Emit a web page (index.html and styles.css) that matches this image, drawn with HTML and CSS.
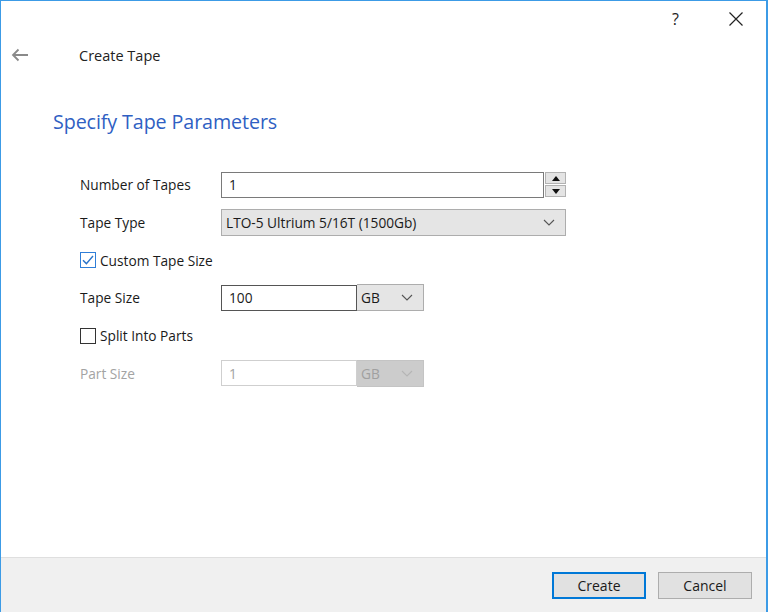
FILE: index.html
```html
<!DOCTYPE html>
<html>
<head>
<meta charset="utf-8">
<link rel="stylesheet" href="styles.css">
</head>
<body>
<div class="window">
  <div class="titlebar">
    <span class="tb-help">?</span>
    <span class="tb-close">
      <svg width="16" height="16" viewBox="0 0 16 16"><path d="M1.5 1.5 L14.5 14.5 M14.5 1.5 L1.5 14.5" stroke="#222" stroke-width="1.2" fill="none"/></svg>
    </span>
  </div>
  <div class="header">
    <span class="back">
      <svg width="18" height="14" viewBox="0 0 18 14"><path d="M17 7 H2 M7.5 1.5 L2 7 L7.5 12.5" stroke="#8a8a8a" stroke-width="1.8" fill="none"/></svg>
    </span>
    <span class="header-title">Create Tape</span>
  </div>
  <div class="content">
    <h1 class="heading">Specify Tape Parameters</h1>
    <div class="form">
      <div class="label">Number of Tapes</div>
      <div class="ctrl">
        <div class="input wide">1</div>
        <div class="spin">
          <div class="spin-btn"><svg width="8" height="5" viewBox="0 0 8 5"><path d="M0 5 L4 0 L8 5 Z" fill="#111"/></svg></div>
          <div class="spin-btn"><svg width="8" height="5" viewBox="0 0 8 5"><path d="M0 0 L4 5 L8 0 Z" fill="#111"/></svg></div>
        </div>
      </div>

      <div class="label">Tape Type</div>
      <div class="ctrl">
        <div class="select big"><span>LTO-5 Ultrium 5/16T (1500Gb)</span><svg class="chev" width="12" height="7" viewBox="0 0 12 7"><path d="M1 1 L6 6 L11 1" stroke="#555" stroke-width="1.1" fill="none"/></svg></div>
      </div>

      <div class="check-row">
        <span class="cbox checked"><svg width="14" height="14" viewBox="0 0 14 14"><path d="M2 7.2 L5.4 10.6 L12 3" stroke="#2a73c8" stroke-width="1.4" fill="none"/></svg></span>
        <span>Custom Tape Size</span>
      </div>

      <div class="label">Tape Size</div>
      <div class="ctrl">
        <div class="input size dark">100</div>
        <div class="select unit"><span>GB</span><svg class="chev" width="12" height="7" viewBox="0 0 12 7"><path d="M1 1 L6 6 L11 1" stroke="#555" stroke-width="1.1" fill="none"/></svg></div>
      </div>

      <div class="check-row">
        <span class="cbox"></span>
        <span>Split Into Parts</span>
      </div>

      <div class="label disabled">Part Size</div>
      <div class="ctrl">
        <div class="input size dis">1</div>
        <div class="select unit dis"><span>GB</span><svg class="chev" width="12" height="7" viewBox="0 0 12 7"><path d="M1 1 L6 6 L11 1" stroke="#b5b5b5" stroke-width="1.1" fill="none"/></svg></div>
      </div>
    </div>
  </div>
  <div class="footer">
    <button class="btn primary">Create</button>
    <button class="btn">Cancel</button>
  </div>
</div>
</body>
</html>
```

FILE: styles.css
```css
* { box-sizing: border-box; }
html, body { margin: 0; padding: 0; }
body {
  width: 768px;
  height: 612px;
  overflow: hidden;
  font-family: "Open Sans", "Noto Sans", sans-serif;
  font-size: 13.7px;
  color: #1a1a1a;
  background: #fff;
}
.window {
  width: 768px;
  height: 612px;
  display: flex;
  flex-direction: column;
  border: 1px solid #3c9be6;
  border-bottom: none;
  border-right-width: 2px;
  background: #fff;
}
.titlebar {
  height: 35px;
  display: flex;
  align-items: center;
  justify-content: flex-end;
  padding-right: 22px;
}
.tb-help {
  font-size: 16px;
  color: #222;
  margin-right: 49px;
  line-height: 1;
}
.tb-close { display: flex; }
.header {
  height: 38px;
  display: flex;
  align-items: center;
  padding-left: 10px;
}
.back { display: flex; width: 68px; }
.header-title {
  font-size: 14.5px;
  color: #222;
}
.content {
  flex: 1;
  padding-left: 52px;
}
.heading {
  margin: 34px 0 0 0;
  font-weight: normal;
  font-size: 19.7px;
  color: #2f5fc3;
  line-height: 28px;
  letter-spacing: -0.1px;
}
.form {
  margin-top: 30px;
  margin-left: 27px;
  display: grid;
  grid-template-columns: 141px auto;
  grid-auto-rows: 37.7px;
  align-items: center;
}
.label { color: #1a1a1a; }
.label.disabled { color: #a3a3a3; }
.ctrl { display: flex; align-items: center; }
.input {
  height: 26px;
  border: 1px solid #7a7a7a;
  background: #fff;
  padding-left: 7px;
  display: flex;
  align-items: center;
}
.input.wide { width: 323px; }
.input.size { width: 136px; }
.input.dark { border-color: #555; }
.input.dis { border-color: #cfcfcf; color: #a3a3a3; }
.spin {
  display: flex;
  flex-direction: column;
  gap: 1px;
  margin-left: 1px;
}
.spin-btn {
  width: 21px;
  height: 12px;
  background: #e4e4e4;
  border: 1px solid #b2b2b2;
  display: flex;
  align-items: center;
  justify-content: center;
}
.select {
  height: 27px;
  background: #e5e5e5;
  border: 1px solid #adadad;
  display: flex;
  align-items: center;
  justify-content: space-between;
  padding: 0 10px 0 6px;
}
.select.big { width: 345px; padding-left: 4px; }
.select.unit { width: 67px; padding-left: 4px; border-left: none; }
.select.dis { background: #cccccc; border-color: #c4c4c4; color: #a0a0a0; }
.chev { display: block; }
.check-row {
  grid-column: 1 / 3;
  display: flex;
  align-items: center;
  gap: 4px;
}
.cbox {
  width: 16px;
  height: 16px;
  border: 1px solid #333;
  background: #fff;
  display: flex;
  align-items: center;
  justify-content: center;
}
.cbox.checked { border-color: #2f7ed8; }
.footer {
  height: 55px;
  background: #f0f0f0;
  border-top: 1px solid #dfdfdf;
  display: flex;
  align-items: center;
  justify-content: flex-end;
  padding-right: 14px;
  gap: 12px;
}
.btn {
  width: 94px;
  height: 27px;
  font-family: "Open Sans", "Noto Sans", sans-serif;
  font-size: 14px;
  color: #1a1a1a;
  background: #e1e1e1;
  border: 1px solid #adadad;
  padding: 0;
}
.btn.primary { border: 2px solid #0078d7; }
```
